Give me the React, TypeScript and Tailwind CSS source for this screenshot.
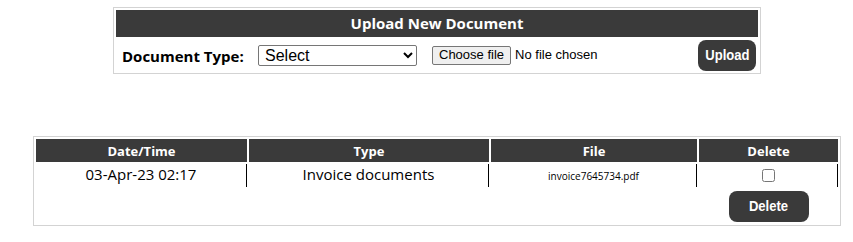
import { useState } from "react";

type Doc = {
  id: number;
  fecha: string;
  tipo: string;
  archivo: string;
};

const docs: Doc[] = [
  { id: 1, fecha: "03-Apr-23 02:17", tipo: "Invoice documents", archivo: "invoice7645734.pdf" },
];

export default function App() {
  const [tipo, setTipo] = useState("");
  const [marcados, setMarcados] = useState<number[]>([]);

  function toggle(id: number) {
    setMarcados(marcados.includes(id) ? marcados.filter((m) => m !== id) : [...marcados, id]);
  }

  return (
    <div className="bg-white min-h-screen font-['Open_Sans',sans-serif] text-black pt-[7px]">

      {/* UPLOAD */}
      <div className="ml-[113px] w-[648px] border border-[#d3d3d3] px-[2px] pt-[2px]">
        <div className="h-[27px] bg-[#3a3a3a] text-white font-bold text-[15px] flex items-center justify-center">
          Upload New Document
        </div>
        <div className="h-[36px] flex items-center pl-[6px] pr-[2px]">
          <span className="font-bold text-[15px] w-[136px] pt-[2px]">Document Type:</span>
          <select
            value={tipo}
            onChange={(e) => setTipo(e.target.value)}
            className="w-[159px] h-[21px] border border-[#767676] rounded-[2px] text-[16px] font-['Liberation_Sans',sans-serif] pl-[2px] bg-white"
          >
            <option value="">Select</option>
            <option value="invoice">Invoice documents</option>
          </select>
          <div className="ml-[15px] flex items-center font-['Liberation_Sans',sans-serif] text-[13px]">
            <span className="h-[19px] px-[6px] flex items-center border border-[#767676] rounded-[2px] bg-[#efefef]">
              Choose file
            </span>
            <span className="ml-[4px]">No file chosen</span>
          </div>
          <button className="ml-auto w-[58px] h-[31px] rounded-[8px] bg-[#3a3a3a] text-white font-bold text-[15px] font-['Liberation_Sans',sans-serif]">
            <span className="inline-block scale-x-[0.87]">Upload</span>
          </button>
        </div>
      </div>

      {/* LISTA */}
      <div className="ml-[33px] mt-[62px] w-[808px] border border-[#d3d3d3]">
        <table className="w-full table-fixed border-separate border-spacing-[2px]">
          <colgroup>
            <col className="w-[211px]" />
            <col className="w-[240px]" />
            <col className="w-[206px]" />
            <col />
          </colgroup>
          <thead>
            <tr className="h-[23px] text-white font-bold text-[13px] leading-[18px]">
              <th className="bg-[#3a3a3a] p-0">Date/Time</th>
              <th className="bg-[#3a3a3a] p-0">Type</th>
              <th className="bg-[#3a3a3a] p-0">File</th>
              <th className="bg-[#3a3a3a] p-0">Delete</th>
            </tr>
          </thead>
          <tbody>
            {docs.map((d) => (
              <tr key={d.id} className="h-[23px] leading-[18px]">
                <td className="p-0 pb-[3px] text-center text-[15px] border-r border-black">{d.fecha}</td>
                <td className="p-0 pb-[3px] text-center text-[15px] border-r border-black">{d.tipo}</td>
                <td className="p-0 text-center text-[10px] border-r border-black">{d.archivo}</td>
                <td className="p-0 pb-[3px] text-center border-r border-black">
                  <input
                    type="checkbox"
                    checked={marcados.includes(d.id)}
                    onChange={() => toggle(d.id)}
                    className="m-0 w-[13px] h-[13px] align-middle"
                  />
                </td>
              </tr>
            ))}
            <tr className="h-[34px]">
              <td className="p-0" colSpan={3}></td>
              <td className="p-0 text-center">
                <button className="w-[80px] h-[31px] rounded-[8px] bg-[#3a3a3a] text-white font-bold text-[15px] font-['Liberation_Sans',sans-serif] align-middle">
                  <span className="inline-block scale-x-[0.87]">Delete</span>
                </button>
              </td>
            </tr>
          </tbody>
        </table>
      </div>

    </div>
  );
}
